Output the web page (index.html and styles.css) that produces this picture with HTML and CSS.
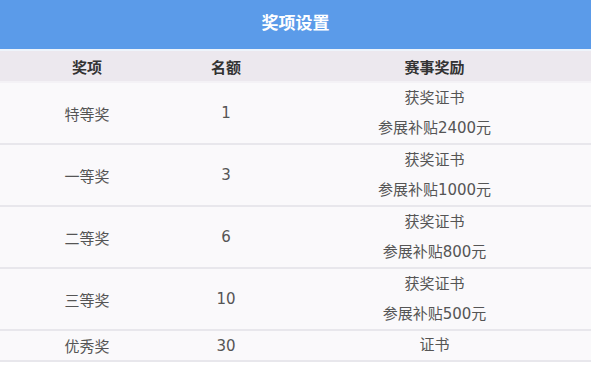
FILE: index.html
```html
<!DOCTYPE html>
<html lang="zh-CN">
<head>
<meta charset="utf-8">
<link rel="stylesheet" href="styles.css">
</head>
<body>
<div class="panel">
  <div class="title">奖项设置</div>
  <table class="prizes">
    <colgroup><col class="c1"><col class="c2"><col class="c3"></colgroup>
    <thead>
      <tr><th>奖项</th><th>名额</th><th>赛事奖励</th></tr>
    </thead>
    <tbody>
      <tr><td>特等奖</td><td>1</td><td><div class="ln">获奖证书</div><div class="ln">参展补贴2400元</div></td></tr>
      <tr><td>一等奖</td><td>3</td><td><div class="ln">获奖证书</div><div class="ln">参展补贴1000元</div></td></tr>
      <tr><td>二等奖</td><td>6</td><td><div class="ln">获奖证书</div><div class="ln">参展补贴800元</div></td></tr>
      <tr><td>三等奖</td><td>10</td><td><div class="ln">获奖证书</div><div class="ln">参展补贴500元</div></td></tr>
      <tr class="single"><td>优秀奖</td><td>30</td><td><div class="ln">证书</div></td></tr>
    </tbody>
  </table>
</div>
</body>
</html>
```
FILE: styles.css
```css
html, body {
  margin: 0;
  padding: 0;
  background: #ffffff;
}
body {
  font-family: "DejaVu Sans", "Noto Sans CJK SC", sans-serif;
}
.panel {
  width: 591px;
}
.title {
  height: 49px;
  line-height: 47px;
  background: #5b9be9;
  color: #ffffff;
  font-size: 17px;
  font-weight: bold;
  text-align: center;
  border-bottom: 2px solid #eef4fb;
}
.prizes {
  width: 100%;
  border-collapse: collapse;
  table-layout: fixed;
}
.c1 { width: 174px; }
.c2 { width: 104px; }
.prizes th {
  background: #ece8ee;
  color: #333333;
  font-size: 15px;
  font-weight: bold;
  height: 30px;
  padding: 0;
  text-align: center;
  vertical-align: middle;
  border-bottom: 2px solid #f4f2f6;
}
.prizes td {
  background: #faf9fb;
  color: #555555;
  font-size: 15px;
  padding: 0;
  height: 60px;
  text-align: center;
  vertical-align: middle;
  border-bottom: 2px solid #e8e7ec;
}
.prizes tr.single td {
  height: 29px;
}
.ln {
  line-height: 30px;
}
.single .ln {
  line-height: 29px;
}
```
